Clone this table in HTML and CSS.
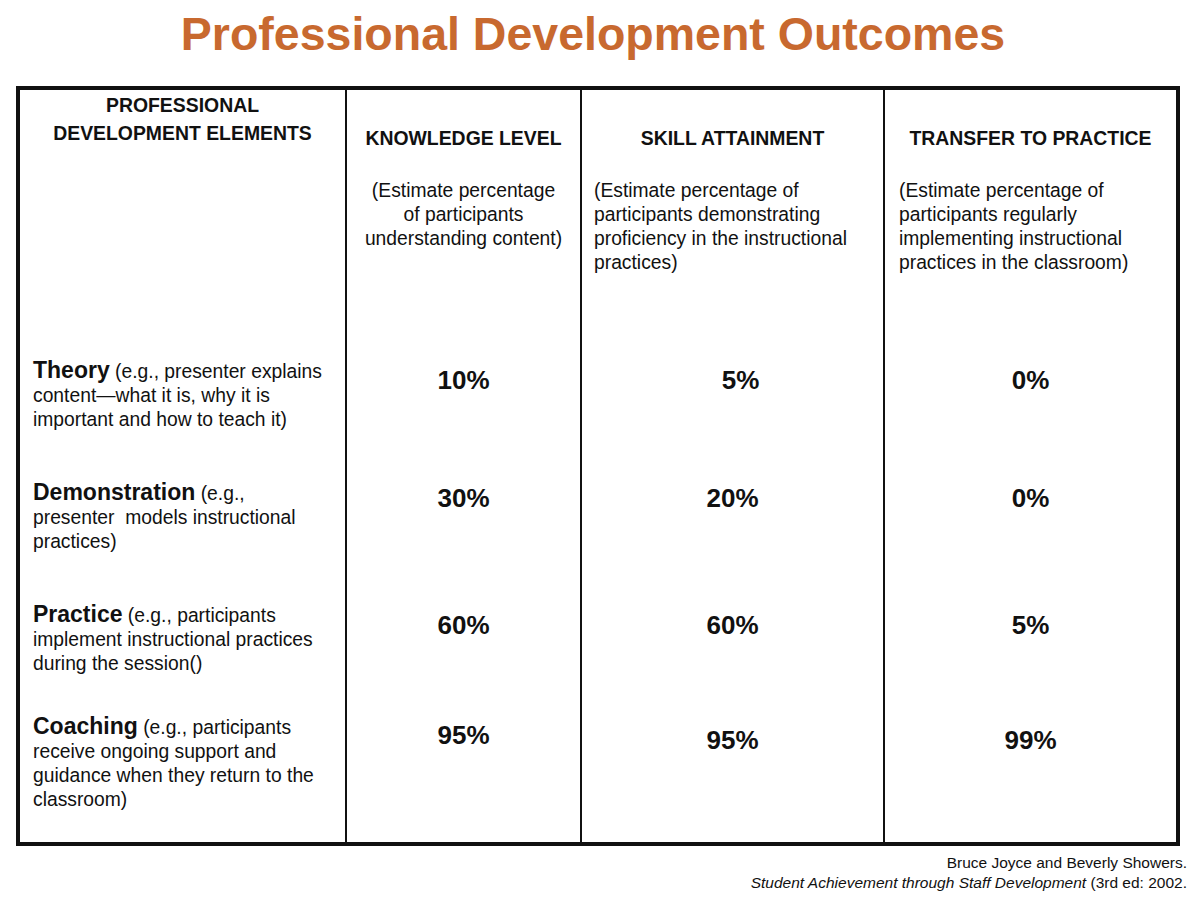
FILE: index.html
```html
<!DOCTYPE html>
<html lang="en">
<head>
<meta charset="utf-8">
<title>Professional Development Outcomes</title>
<link rel="stylesheet" href="styles.css">
</head>
<body>
<h1 class="title">Professional Development Outcomes</h1>
<div class="outcomes">
  <div class="cell head-first">PROFESSIONAL<br>DEVELOPMENT ELEMENTS</div>
  <div class="cell col">
    <div class="head">KNOWLEDGE LEVEL</div>
    <p class="note center">(Estimate percentage<br>of participants<br>understanding content)</p>
  </div>
  <div class="cell col">
    <div class="head">SKILL ATTAINMENT</div>
    <p class="note left3">(Estimate percentage of<br>participants demonstrating<br>proficiency in the instructional<br>practices)</p>
  </div>
  <div class="cell col">
    <div class="head">TRANSFER TO PRACTICE</div>
    <p class="note left4">(Estimate percentage of<br>participants regularly<br>implementing instructional<br>practices in the classroom)</p>
  </div>

  <div class="cell element"><strong>Theory</strong> (e.g., presenter explains<br>content—what it is, why it is<br>important and how to teach it)</div>
  <div class="cell col value v-theory">10%</div>
  <div class="cell col value v-theory shift">5%</div>
  <div class="cell col value v-theory">0%</div>

  <div class="cell element"><strong>Demonstration</strong> (e.g.,<br>presenter&nbsp; models instructional<br>practices)</div>
  <div class="cell col value v-demo">30%</div>
  <div class="cell col value v-demo">20%</div>
  <div class="cell col value v-demo">0%</div>

  <div class="cell element"><strong>Practice</strong> (e.g., participants<br>implement instructional practices<br>during the session()</div>
  <div class="cell col value v-practice">60%</div>
  <div class="cell col value v-practice">60%</div>
  <div class="cell col value v-practice">5%</div>

  <div class="cell element"><strong>Coaching</strong> (e.g., participants<br>receive ongoing support and<br>guidance when they return to the<br>classroom)</div>
  <div class="cell col value v-coach">95%</div>
  <div class="cell col value v-coach-low">95%</div>
  <div class="cell col value v-coach-low">99%</div>
</div>
<div class="source">
  <div>Bruce Joyce and Beverly Showers.</div>
  <div><em>Student Achievement through Staff Development</em> (3rd ed: 2002.</div>
</div>
</body>
</html>
```

FILE: styles.css
```css
html, body {
  margin: 0;
  padding: 0;
  background: #ffffff;
}

body {
  font-family: "Liberation Sans", Arial, sans-serif;
  color: #111111;
}

.title {
  margin: 0;
  padding: 6px 14px 0 0;
  height: 86px;
  box-sizing: border-box;
  text-align: center;
  font-size: 46.5px;
  line-height: 56px;
  font-weight: bold;
  color: #c8692f;
}

.outcomes {
  margin-left: 16px;
  width: 1164px;
  box-sizing: border-box;
  border: 4px solid #111111;
  display: grid;
  grid-template-columns: 325px 235px 303px 293px;
  grid-template-rows: 260px 122px 122px 112px 136px;
}

.cell {
  box-sizing: border-box;
}

.col {
  border-left: 2px solid #111111;
}

.head-first {
  padding-top: 1px;
  text-align: center;
  font-weight: bold;
  font-size: 19.4px;
  line-height: 28px;
}

.head {
  padding-top: 34px;
  text-align: center;
  font-weight: bold;
  font-size: 19.4px;
  line-height: 28px;
}

.note {
  margin: 27px 0 0 0;
  font-size: 19.3px;
  line-height: 24px;
}

.note.center {
  text-align: center;
}

.note.left3 {
  padding-left: 12px;
}

.note.left4 {
  padding-left: 14px;
}

.element {
  padding: 8px 6px 0 13px;
  font-size: 19.3px;
  line-height: 24px;
}

.element strong {
  font-size: 23px;
}

.value {
  text-align: center;
  font-weight: bold;
  font-size: 26px;
  line-height: 30px;
}

.v-theory { padding-top: 15px; }
.v-demo { padding-top: 11px; }
.v-practice { padding-top: 16px; }
.v-coach { padding-top: 14px; }
.v-coach-low { padding-top: 19px; }

.shift {
  padding-left: 16px;
}

.source {
  margin-top: 7px;
  padding-right: 13px;
  text-align: right;
  font-size: 15.5px;
  line-height: 20px;
}
```
